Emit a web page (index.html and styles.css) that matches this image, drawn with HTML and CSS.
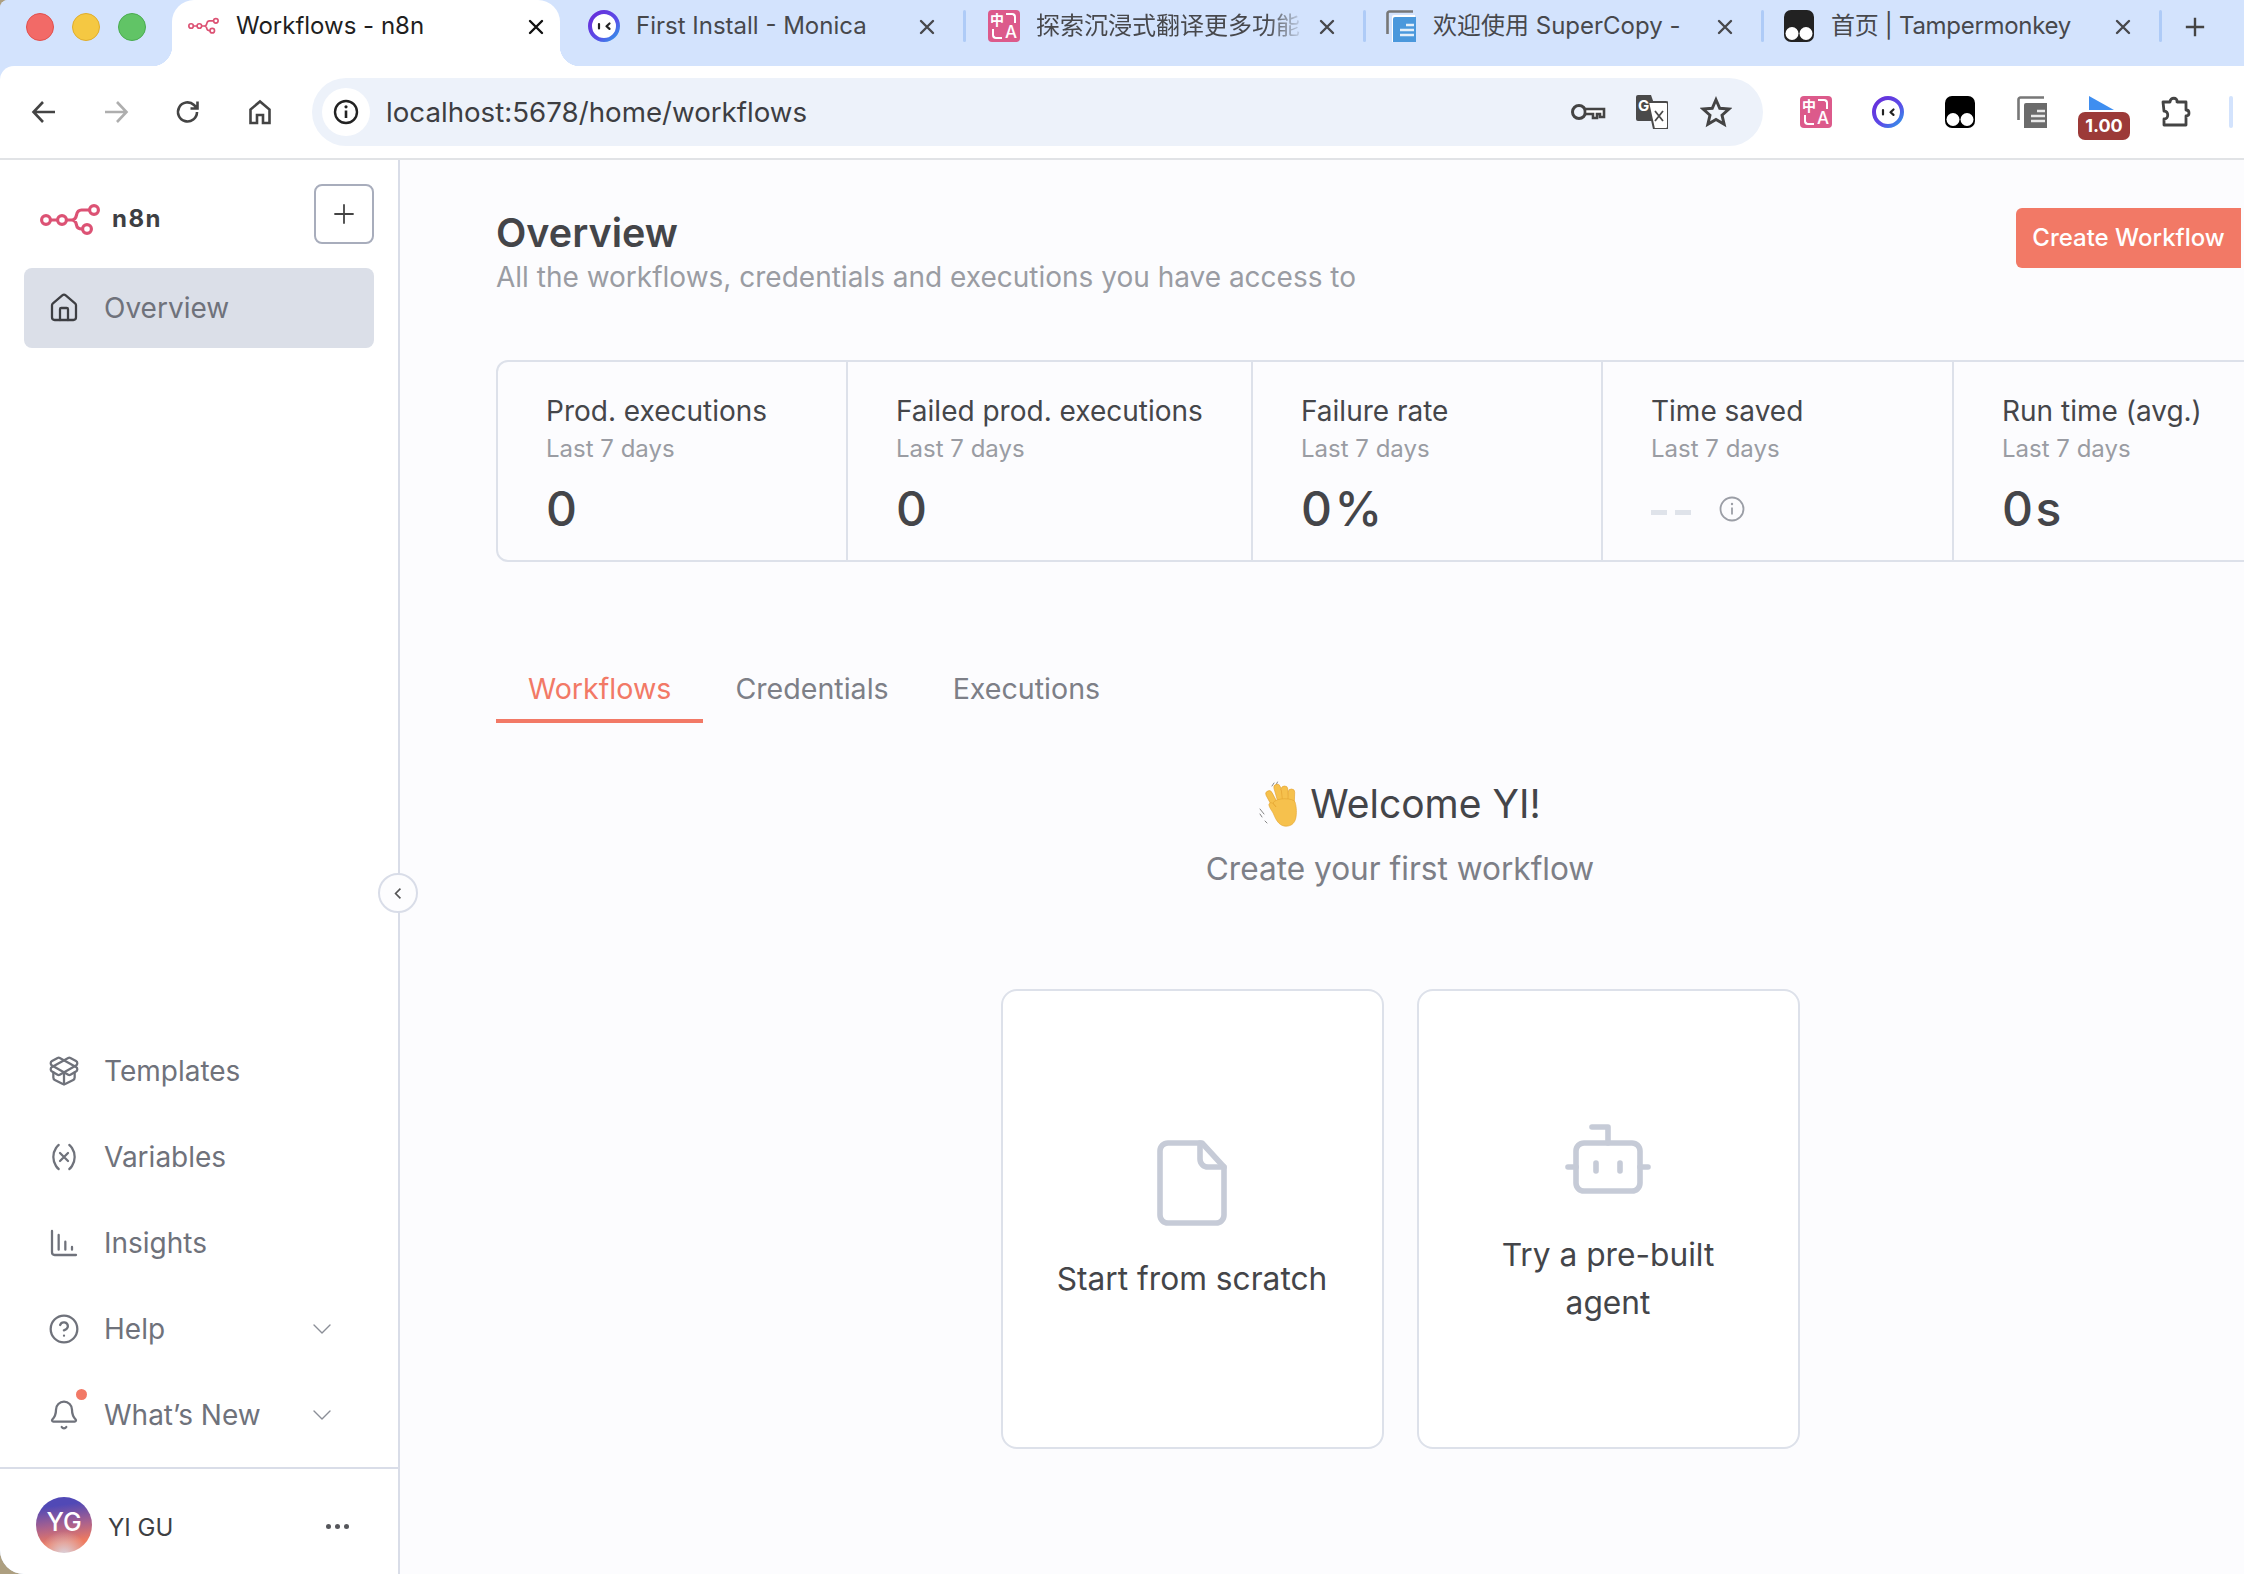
FILE: index.html
```html
<!DOCTYPE html>
<html lang="en">
<head>
    <meta charset="UTF-8">
    <meta name="viewport" content="width=device-width, initial-scale=1.0">
    <title>Workflows - n8n</title>
    <link rel="stylesheet" href="styles.css">
</head>
<body>
    <svg class="sprite" xmlns="http://www.w3.org/2000/svg">
        <defs>
            <linearGradient id="monicaRing" x1="0" y1="0" x2="1" y2="1">
                <stop offset="0" stop-color="#6a2bd9"/>
                <stop offset="0.6" stop-color="#5a4de8"/>
                <stop offset="1" stop-color="#2f9be8"/>
            </linearGradient>
        </defs>
        <symbol id="n8nLogo" viewBox="0 0 62 40">
            <g fill="none" stroke="#dc5274" stroke-width="3.2" stroke-linecap="round">
                <circle cx="6" cy="20" r="4.4"/>
                <circle cx="22" cy="20" r="4.4"/>
                <circle cx="54" cy="10" r="4.4"/>
                <circle cx="47" cy="29" r="4.4"/>
                <path d="M10.5 20h7M26.5 20h5c3 0 4.500-2 5-5 .6-3 2-5 5-5h7.500M31.500 20c3 0 4.500 2 5 5 .4 2.500 2 4 5.500 4"/>
            </g>
        </symbol>
        <symbol id="monica" viewBox="0 0 32 32">
            <circle cx="16" cy="16" r="14" fill="#fff" stroke="url(#monicaRing)" stroke-width="4"/>
            <path d="M11 14v4.500M21.500 13.500l-3 2.700 3 2.700" fill="none" stroke="#222" stroke-width="2.200" stroke-linecap="round" stroke-linejoin="round"/>
        </symbol>
        <symbol id="monkey" viewBox="0 0 30 32">
            <rect width="30" height="32" rx="7"/>
            <circle cx="8" cy="23.500" r="6.500" fill="#fff"/>
            <circle cx="22" cy="23.500" r="6.500" fill="#fff"/>
        </symbol>
        <symbol id="copyPages" viewBox="0 0 30 32">
            <path d="M27 1.500H3.500a2 2 0 0 0-2 2V24" fill="none" stroke="#777" stroke-width="2.600"/>
            <path d="M29 5H8a2 2 0 0 0-2 2v25h23z" fill="#fff"/>
            <path d="M30 7H9a2 2 0 0 0-2 2v23h23z" fill="currentColor"/>
            <path d="M20 15h8M14 20h14M14 25h14" stroke="#fff" stroke-width="2.400" opacity=".85"/>
        </symbol>
        <symbol id="chevronDown" viewBox="0 0 18 10">
            <path d="M1 1l8 8 8-8" fill="none" stroke="#8b8e97" stroke-width="1.400" stroke-linecap="round" stroke-linejoin="round"/>
        </symbol>
        <symbol id="closeX" viewBox="0 0 16 16">
            <path d="M2 2l12 12M14 2L2 14" fill="none" stroke="currentColor" stroke-width="2.400" stroke-linecap="round"/>
        </symbol>
    </svg>

    <div class="window">
        <div class="tabstrip">
            <div class="lights">
                <span class="light red"></span>
                <span class="light yellow"></span>
                <span class="light green"></span>
            </div>
            <div class="tab active">
                <svg class="fav"><use href="#n8nLogo"/></svg>
                <span class="tab-title">Workflows - n8n</span>
                <svg class="tab-close"><use href="#closeX"/></svg>
            </div>
            <div class="tab second">
                <svg class="fav"><use href="#monica"/></svg>
                <span class="tab-title">First Install - Monica</span>
                <svg class="tab-close"><use href="#closeX"/></svg>
            </div>
            <i class="tab-sep"></i>
            <div class="tab">
                <span class="fanyi fav"><b>中</b><b class="fanyi-a">A</b></span>
                <span class="tab-title faded">探索沉浸式翻译更多功能</span>
                <svg class="tab-close"><use href="#closeX"/></svg>
            </div>
            <i class="tab-sep"></i>
            <div class="tab narrow">
                <svg class="fav copy-blue"><use href="#copyPages"/></svg>
                <span class="tab-title">欢迎使用 SuperCopy -</span>
                <svg class="tab-close"><use href="#closeX"/></svg>
            </div>
            <i class="tab-sep"></i>
            <div class="tab narrow">
                <svg class="fav monkey-dark"><use href="#monkey"/></svg>
                <span class="tab-title tight">首页 | Tampermonkey</span>
                <svg class="tab-close"><use href="#closeX"/></svg>
            </div>
            <i class="tab-sep"></i>
            <svg class="new-tab" viewBox="0 0 24 24"><path d="M12 2v20M2 12h20" fill="none" stroke="#444" stroke-width="2.600"/></svg>
        </div>

        <div class="toolbar">
            <div class="nav-btn">
                <svg viewBox="0 0 26 26"><path d="M24 13H3M12 3L2.500 13l9.500 10" fill="none" stroke="#444" stroke-width="2.600"/></svg>
            </div>
            <div class="nav-btn">
                <svg viewBox="0 0 26 26"><path d="M2 13h21M14 3l9.500 10L14 23" fill="none" stroke="#aeaeae" stroke-width="2.600"/></svg>
            </div>
            <div class="nav-btn">
                <svg viewBox="0 0 26 26"><path d="M22 13a9.500 9.500 0 1 1-3-7l3 3M22.500 2.500V9.500h-7" fill="none" stroke="#444" stroke-width="2.600"/></svg>
            </div>
            <div class="nav-btn">
                <svg viewBox="0 0 26 26"><path d="M3.500 24V10.500L13 2.500l9.500 8V24h-6.500v-8h-6v8z" fill="none" stroke="#444" stroke-width="2.600"/></svg>
            </div>
            <div class="address">
                <span class="site-info">
                    <svg viewBox="0 0 26 26"><circle cx="13" cy="13" r="11" fill="none" stroke="#222" stroke-width="2.400"/><path d="M13 11.500V19" stroke="#222" stroke-width="2.600"/><circle cx="13" cy="7.800" r="1.600" fill="#222"/></svg>
                </span>
                <span class="url">localhost:5678/home/workflows</span>
                <span class="address-icons">
                    <svg class="key" viewBox="0 0 36 20"><circle cx="9" cy="10" r="6.500" fill="none" stroke="#444" stroke-width="3"/><path d="M15 7h19v8h-4v-3h-3v4h-4v-4h-8z" fill="#fff" stroke="#444" stroke-width="2.600"/></svg>
                    <svg class="gtrans" viewBox="0 0 32 34">
                        <path d="M2 0h13l9 26H2a2 2 0 0 1-2-2V2a2 2 0 0 1 2-2z" fill="#4a4a4a"/>
                        <path d="M12 7h18a2 2 0 0 1 2 2v23a2 2 0 0 1-2 2H18z" fill="#fff" stroke="#4a4a4a" stroke-width="2"/>
                        <text x="2" y="16" class="gtrans-g">G</text>
                        <path d="M19 16l8 10M27 16l-8 10" stroke="#4a4a4a" stroke-width="1.800"/>
                    </svg>
                    <svg class="star" viewBox="0 0 24 24"><path d="M12 2.800l2.800 6.400 6.900.6-5.200 4.600 1.600 6.800-6.100-3.600-6.100 3.600 1.600-6.800-5.200-4.600 6.900-.6z" fill="none" stroke="#444" stroke-width="2.200"/></svg>
                </span>
            </div>
            <div class="extensions">
                <span class="ext"><span class="fanyi"><b>中</b><b class="fanyi-a">A</b></span></span>
                <span class="ext"><svg class="ext-icon"><use href="#monica"/></svg></span>
                <span class="ext"><svg class="ext-icon monkey-black"><use href="#monkey"/></svg></span>
                <span class="ext"><svg class="ext-icon copy-grey"><use href="#copyPages"/></svg></span>
                <span class="ext">
                    <svg class="ext-icon" viewBox="0 0 32 32"><path d="M1 0l25 14H1z" fill="#3f8ef0"/></svg>
                    <span class="speed-badge">1.00</span>
                </span>
                <span class="ext">
                    <svg class="ext-icon" viewBox="0 0 32 32"><path d="M3 6h7c0-5 8-5 7 0h9v8c4 0 4 6 0 6v9H4v-6c5 0 5-8 0-8z" fill="none" stroke="#444" stroke-width="2.800" stroke-linejoin="round"/></svg>
                </span>
                <i class="toolbar-sep"></i>
            </div>
        </div>

        <div class="app">
            <aside class="sidebar">
                <div class="side-head">
                    <div class="brand">
                        <svg class="brand-logo"><use href="#n8nLogo"/></svg>
                        <span class="brand-name">n8n</span>
                    </div>
                    <button class="add-btn">
                        <svg viewBox="0 0 20 20"><path d="M10 1v18M1 10h18" fill="none" stroke="#444" stroke-width="1.800" stroke-linecap="round"/></svg>
                    </button>
                </div>
                <a class="overview-link">
                    <svg class="nav-icon dark" viewBox="0 0 24 24"><path d="M15 21v-8a1 1 0 0 0-1-1h-4a1 1 0 0 0-1 1v8"/><path d="M3 10a2 2 0 0 1 .709-1.528l7-5.999a2 2 0 0 1 2.582 0l7 5.999A2 2 0 0 1 21 10v9a2 2 0 0 1-2 2H5a2 2 0 0 1-2-2z"/></svg>
                    <span>Overview</span>
                </a>

                <nav class="side-bottom">
                    <a class="side-item">
                        <svg class="nav-icon" viewBox="0 0 24 24"><path d="M12 22v-9"/><path d="M15.170 2.210a1.670 1.670 0 0 1 1.630 0L21 4.570a1.930 1.930 0 0 1 0 3.360L8.820 14.790a1.655 1.655 0 0 1-1.640 0L3 12.430a1.930 1.930 0 0 1 0-3.360z"/><path d="M20 13v3.870a2.060 2.060 0 0 1-1.110 1.830l-6 3.080a1.930 1.930 0 0 1-1.780 0l-6-3.080A2.060 2.060 0 0 1 4 16.870V13"/><path d="M21 12.430a1.930 1.930 0 0 0 0-3.360L8.830 2.200a1.640 1.640 0 0 0-1.630 0L3 4.570a1.930 1.930 0 0 0 0 3.360l12.180 6.860a1.636 1.636 0 0 0 1.630 0z"/></svg>
                        <span>Templates</span>
                    </a>
                    <a class="side-item">
                        <svg class="nav-icon" viewBox="0 0 24 24"><path d="M8 21s-4-3-4-9 4-9 4-9"/><path d="M16 3s4 3 4 9-4 9-4 9"/><path d="M15 9l-6 6M9 9l6 6"/></svg>
                        <span>Variables</span>
                    </a>
                    <a class="side-item">
                        <svg class="nav-icon" viewBox="0 0 24 24"><path d="M3 3v16a2 2 0 0 0 2 2h16"/><path d="M8 6v11M13 11v6M18 15v2"/></svg>
                        <span>Insights</span>
                    </a>
                    <a class="side-item">
                        <svg class="nav-icon" viewBox="0 0 24 24"><circle cx="12" cy="12" r="10"/><path d="M9.090 9a3 3 0 0 1 5.830 1c0 2-3 3-3 3"/><path d="M12 17h.01"/></svg>
                        <span>Help</span>
                        <svg class="chev"><use href="#chevronDown"/></svg>
                    </a>
                    <a class="side-item">
                        <span class="bell">
                            <svg class="nav-icon" viewBox="0 0 24 24"><path d="M10.268 21a2 2 0 0 0 3.464 0"/><path d="M3.262 15.326A1 1 0 0 0 4 17h16a1 1 0 0 0 .74-1.673C19.410 13.956 18 12.499 18 8A6 6 0 0 0 6 8c0 4.499-1.411 5.956-2.738 7.326"/></svg>
                            <i class="bell-dot"></i>
                        </span>
                        <span>What’s New</span>
                        <svg class="chev"><use href="#chevronDown"/></svg>
                    </a>
                </nav>

                <div class="user-row">
                    <span class="avatar">YG</span>
                    <span class="user-name">YI GU</span>
                    <span class="dots"><i></i><i></i><i></i></span>
                </div>
            </aside>

            <span class="collapse-btn">
                <svg viewBox="0 0 12 16"><path d="M9 2L3 8l6 6" fill="none" stroke="#555" stroke-width="2"/></svg>
            </span>

            <main class="main">
                <div class="content">
                    <header class="page-head">
                        <div>
                            <h1>Overview</h1>
                            <p>All the workflows, credentials and executions you have access to</p>
                        </div>
                        <button class="create-btn">Create Workflow</button>
                    </header>

                    <section class="stats">
                        <div class="stat">
                            <div class="stat-label">Prod. executions</div>
                            <div class="stat-sub">Last 7 days</div>
                            <div class="stat-value">0</div>
                        </div>
                        <div class="stat">
                            <div class="stat-label">Failed prod. executions</div>
                            <div class="stat-sub">Last 7 days</div>
                            <div class="stat-value">0</div>
                        </div>
                        <div class="stat">
                            <div class="stat-label">Failure rate</div>
                            <div class="stat-sub">Last 7 days</div>
                            <div class="stat-value">0%</div>
                        </div>
                        <div class="stat">
                            <div class="stat-label">Time saved</div>
                            <div class="stat-sub">Last 7 days</div>
                            <div class="stat-value empty">
                                <span class="dashes"><i></i><i></i></span>
                                <svg class="info" viewBox="0 0 26 26"><circle cx="13" cy="13" r="11.500" fill="none" stroke="#9b9ea6" stroke-width="1.800"/><path d="M13 11.500v7" stroke="#9b9ea6" stroke-width="1.800"/><circle cx="13" cy="8" r="1.200" fill="#9b9ea6"/></svg>
                            </div>
                        </div>
                        <div class="stat">
                            <div class="stat-label">Run time (avg.)</div>
                            <div class="stat-sub">Last 7 days</div>
                            <div class="stat-value">0s</div>
                        </div>
                    </section>

                    <div class="tabs">
                        <a class="page-tab selected">Workflows</a>
                        <a class="page-tab">Credentials</a>
                        <a class="page-tab">Executions</a>
                    </div>

                    <section class="welcome">
                        <h2>
                            <svg class="wave" viewBox="0 0 40 46">
                                <g fill="none" stroke="#777" stroke-width=".9" stroke-linecap="round">
                                    <path d="M13 5l2-3M17 4l1.500-3M1 33l2 3M1 28l4 5M6 40l2 2"/>
                                </g>
                                <g fill="#f6c14d" stroke="#e3a22f" stroke-width=".6">
                                    <rect x="17" y="3" width="6.500" height="22" rx="3.200" transform="rotate(-16 20 14)"/>
                                    <rect x="23" y="5" width="6.500" height="20" rx="3.200" transform="rotate(-6 26 15)"/>
                                    <rect x="29" y="8" width="6.500" height="18" rx="3.200" transform="rotate(2 32 17)"/>
                                    <rect x="10" y="9" width="6.500" height="20" rx="3.200" transform="rotate(-28 13 19)"/>
                                    <path d="M14 22c3-6 21-5 22-1 1 3 2 9 1 15-1 7-6 10-12 9-5-1-8-6-10-11-1-3-6-9-5-11 2-3 5 0 7 3z"/>
                                </g>
                            </svg>
                            <span>Welcome YI!</span>
                        </h2>
                        <p>Create your first workflow</p>
                        <div class="start-cards">
                            <div class="start-card">
                                <svg class="start-icon" viewBox="0 0 24 24"><path d="M14.500 2H6a2 2 0 0 0-2 2v16a2 2 0 0 0 2 2h12a2 2 0 0 0 2-2V8z"/><path d="M14 2v4a2 2 0 0 0 2 2h4"/></svg>
                                <span>Start from scratch</span>
                            </div>
                            <div class="start-card">
                                <svg class="start-icon" viewBox="0 0 24 24"><path d="M12 8V4H8"/><rect x="4" y="8" width="16" height="12" rx="2"/><path d="M2 14h2M20 14h2M15 13v2M9 13v2"/></svg>
                                <span>Try a pre-built<br>agent</span>
                            </div>
                        </div>
                    </section>
                </div>
            </main>
        </div>
    </div>
</body>
</html>
```

FILE: styles.css
```css
* { box-sizing: border-box; }
body {
    margin: 0;
    height: 100vh;
    overflow: hidden;
    background-color: #ad9f80;
    font-family: Inter, "Noto Sans CJK SC", sans-serif;
    color: #444549;
}
.sprite { position: absolute; width: 0; height: 0; }

.window {
    height: 100vh;
    display: flex;
    flex-direction: column;
    overflow: hidden;
    border-radius: 8px 0 0 24px;
    background-color: #d3e3fd;
}

/* browser tab strip */
.tabstrip {
    height: 66px;
    flex-shrink: 0;
    display: flex;
    background-color: #d3e3fd;
}
.lights { width: 172px; flex-shrink: 0; display: flex; gap: 18px; padding: 13px 0 0 26px; }
.light { width: 28px; height: 28px; border-radius: 50%; }
.red { background-color: #f26a67; border: 1px solid #e2504d; }
.yellow { background-color: #f5c842; border: 1px solid #e0ad2b; }
.green { background-color: #61c466; border: 1px solid #4aac50; }
.tab {
    width: 397px;
    height: 66px;
    flex-shrink: 0;
    display: flex;
    align-items: flex-start;
    padding: 10px 20px 0 22px;
    font-size: 24px;
    color: #47484c;
    position: relative;
}
.tab.second { margin-left: 6px; }
.tab.narrow { width: 395px; padding-left: 19px; }
.tab.active {
    width: 388px;
    padding-left: 16px;
    background-color: #fff;
    color: #1f1f1f;
    border-radius: 22px 22px 0 0;
}
.tab.active .tab-close { color: #111; margin-right: -4px; }
.tab.active::before,
.tab.active::after {
    content: "";
    position: absolute;
    bottom: 0;
    width: 20px;
    height: 20px;
}
.tab.active::before { left: -20px; background: radial-gradient(circle at 0 0, #d3e3fd 20px, #fff 20.500px); }
.tab.active::after { right: -20px; background: radial-gradient(circle at 100% 0, #d3e3fd 20px, #fff 20.500px); }
.fav { width: 32px; height: 32px; flex-shrink: 0; }
.tab-title {
    flex: 1;
    min-width: 0;
    margin: 0 14px 0 16px;
    line-height: 32px;
    white-space: nowrap;
    overflow: hidden;
}
.tab-title.tight { letter-spacing: -0.3px; }
.tab-title.faded { -webkit-mask-image: linear-gradient(to right, #000 86%, transparent 100%); mask-image: linear-gradient(to right, #000 86%, transparent 100%); }
.tab-close { width: 16px; height: 16px; flex-shrink: 0; margin: 9px 8px 0 0; color: #47484c; }
.tab-sep { width: 3px; height: 32px; margin-top: 10px; flex-shrink: 0; border-radius: 2px; background-color: #aecbf7; }
.new-tab { width: 22px; height: 22px; margin: 16px 0 0 22px; }
.fanyi {
    width: 32px;
    height: 32px;
    flex-shrink: 0;
    display: block;
    position: relative;
    border-radius: 4px;
    background-color: #dc5a8b;
    color: #fff;
    font-size: 14px;
    line-height: 15px;
    overflow: hidden;
}
.fanyi b { font-weight: 700; position: absolute; left: 2px; top: 2px; }
.fanyi .fanyi-a { left: auto; right: 3px; top: 14px; font-size: 17px; font-weight: 500; line-height: 17px; }
.fanyi::before,
.fanyi::after { content: ""; position: absolute; width: 8px; height: 8px; border: 0 solid #fff; }
.fanyi::before { right: 4px; top: 3px; border-width: 2px 2px 0 0; border-top-right-radius: 4px; }
.fanyi::after { left: 4px; bottom: 3px; border-width: 0 0 2px 2px; border-bottom-left-radius: 4px; }
.copy-blue { color: #4a98dc; }
.copy-grey { color: #6b6b6b; }
.monkey-dark { color: #222; fill: #222; }
.monkey-black { fill: #000; }

/* toolbar */
.toolbar {
    height: 94px;
    flex-shrink: 0;
    display: flex;
    align-items: center;
    padding: 0 0 0 20px;
    background-color: #fff;
    border-bottom: 2px solid #e1e3e6;
    border-top-left-radius: 14px;
}
.nav-btn { width: 48px; height: 48px; margin-right: 24px; display: flex; align-items: center; justify-content: center; }
.nav-btn svg { width: 26px; height: 26px; }
.address {
    width: 1451px;
    height: 68px;
    margin-left: 4px;
    flex-shrink: 0;
    display: flex;
    align-items: center;
    padding: 0 31px 0 10px;
    border-radius: 34px;
    background-color: #edf2fa;
}
.site-info { width: 48px; height: 48px; border-radius: 50%; background-color: #fff; display: flex; align-items: center; justify-content: center; }
.site-info svg { width: 26px; height: 26px; }
.url { margin-left: 16px; font-size: 27.700px; color: #3d3e42; }
.address-icons { margin-left: auto; display: flex; align-items: center; gap: 30px; }
.key { width: 36px; height: 20px; }
.gtrans { width: 32px; height: 34px; }
.gtrans-g { font-size: 15px; font-weight: 700; fill: #fff; }
.star { width: 32px; height: 32px; margin-left: 2px; }
.extensions { display: flex; align-items: center; margin-left: 17px; }
.ext { width: 72px; height: 32px; position: relative; display: flex; justify-content: center; }
.ext-icon { width: 32px; height: 32px; }
.speed-badge {
    position: absolute;
    left: 10px;
    top: 16px;
    width: 52px;
    height: 28px;
    border-radius: 7px;
    background-color: #9c3a38;
    color: #fff;
    font-size: 18px;
    font-weight: 700;
    line-height: 28px;
    text-align: center;
}
.toolbar-sep { width: 4px; height: 32px; margin-left: 17px; border-radius: 2px; background-color: #d3e3fd; flex-shrink: 0; }

/* n8n app */
.app { flex: 1; min-height: 0; display: flex; position: relative; }
.sidebar {
    width: 400px;
    flex-shrink: 0;
    display: flex;
    flex-direction: column;
    background-color: #fff;
    border-right: 2px solid #d9dde8;
}
.side-head { height: 84px; margin-top: 24px; padding-left: 40px; padding-right: 24px; display: flex; justify-content: space-between; }
.brand { display: flex; align-items: flex-start; gap: 10px; margin-top: 16px; }
.brand-logo { width: 62px; height: 40px; }
.brand-name { font-size: 24px; font-weight: 700; letter-spacing: 1.500px; line-height: 38px; color: #3e3f43; }
.add-btn {
    width: 60px;
    height: 60px;
    padding: 0;
    display: flex;
    align-items: center;
    justify-content: center;
    background-color: #fff;
    border: 2px solid #a8adbc;
    border-radius: 8px;
}
.add-btn svg { width: 20px; height: 20px; }
.overview-link {
    height: 80px;
    margin-left: 24px;
    width: 350px;
    display: flex;
    align-items: center;
    gap: 24px;
    padding-left: 24px;
    border-radius: 8px;
    background-color: #dbdfe8;
    font-size: 28px;
    color: #6f727b;
}
.nav-icon { width: 32px; height: 32px; flex-shrink: 0; fill: none; stroke: #6f727b; stroke-width: 1.700; stroke-linecap: round; stroke-linejoin: round; }
.nav-icon.dark { stroke: #3e3f43; }
.side-bottom { margin-top: auto; padding-bottom: 9px; }
.side-item {
    height: 86px;
    display: flex;
    align-items: center;
    gap: 24px;
    padding-left: 48px;
    font-size: 28px;
    color: #6f727b;
}
.chev { width: 18px; height: 10px; margin-left: auto; margin-right: 67px; }
.bell { position: relative; display: flex; }
.bell-dot { position: absolute; left: 28px; top: -10px; width: 11px; height: 11px; border-radius: 50%; background-color: #f27966; }
.user-row {
    height: 107px;
    flex-shrink: 0;
    display: flex;
    align-items: flex-start;
    padding: 28px 49px 0 36px;
    border-top: 2px solid #d9dde8;
}
.avatar {
    width: 56px;
    height: 56px;
    flex-shrink: 0;
    border-radius: 50%;
    background: radial-gradient(circle at 50% 105%, #d9d9e6 0, rgba(217,217,230,0) 38%), linear-gradient(172deg, #5149b6 18%, #a9618e 50%, #ee7b60 78%);
    color: #fff;
    font-size: 25px;
    font-weight: 500;
    line-height: 50px;
    text-align: center;
}
.user-name { margin-left: 16px; font-size: 24px; line-height: 61px; color: #3e3f43; }
.dots { margin-left: auto; display: flex; gap: 4px; padding-top: 27px; }
.dots i { width: 5px; height: 5px; border-radius: 50%; background-color: #55565b; }
.collapse-btn {
    position: absolute;
    left: 378px;
    top: 713px;
    width: 40px;
    height: 40px;
    display: flex;
    align-items: center;
    justify-content: center;
    border-radius: 50%;
    background-color: #fdfdfe;
    border: 2px solid #d9dde8;
}
.collapse-btn svg { width: 10px; height: 13px; }

/* main page */
.main { flex: 1; min-width: 0; overflow: hidden; padding-left: 96px; background-color: #fcfcfe; }
.content { width: 1808px; }
.page-head { display: flex; justify-content: space-between; align-items: flex-start; padding-top: 48px; padding-right: 63px; }
h1 { margin: 1px 0 2px; font-size: 39.500px; font-weight: 600; line-height: 48px; color: #444549; }
.page-head p { margin: 0; font-size: 28px; line-height: 36px; color: #9a9ca3; }
.create-btn {
    width: 225px;
    height: 60px;
    padding: 0 0 2px;
    border: none;
    border-radius: 6px 0 0 6px;
    background-color: #f27966;
    color: #fff;
    font-family: inherit;
    font-size: 24px;
    font-weight: 500;
}
.stats {
    margin-top: 65px;
    height: 202px;
    display: grid;
    grid-template-columns: 348px 405px 350px 351px 1fr;
    border: 2px solid #dde1ea;
    border-radius: 12px 0 0 12px;
}
.stat { padding: 31px 0 0 48px; border-left: 2px solid #dde1ea; }
.stat:first-child { padding-left: 48px; border-left: none; }
.stat-label { font-size: 28px; line-height: 36px; color: #45464a; }
.stat-sub { margin-top: 4px; font-size: 24px; line-height: 32px; color: #9a9ca3; }
.stat-value { margin-top: 16px; font-size: 48px; font-weight: 500; line-height: 56px; letter-spacing: 2.500px; color: #444549; }
.stat-value.empty { display: flex; align-items: center; gap: 28px; min-height: 56px; }
.dashes { display: flex; gap: 8px; margin-top: 6px; }
.dashes i { width: 16px; height: 5px; background-color: #dfe3ea; }
.info { width: 26px; height: 26px; }
.tabs { margin: 109px 0 0; display: flex; }
.page-tab { padding: 0 32px 12px; height: 52px; font-size: 28.600px; line-height: 36px; color: #7d7f87; }
.page-tab.selected { color: #f27966; border-bottom: 4px solid #f27966; }
.welcome { display: flex; flex-direction: column; align-items: center; }
h2 { margin: 53px 0 0; display: flex; align-items: center; gap: 11px; font-size: 39px; font-weight: 400; line-height: 56px; color: #444549; }
.wave { width: 40px; height: 46px; }
.welcome > p { margin: 17px 0 0; font-size: 31.600px; line-height: 40px; color: #7d7f87; }
.start-cards { margin-top: 100px; display: flex; gap: 33px; }
.start-card {
    width: 383px;
    height: 460px;
    display: flex;
    flex-direction: column;
    align-items: center;
    justify-content: center;
    gap: 24px;
    background-color: #fff;
    border: 2px solid #dde1ea;
    border-radius: 16px;
    font-size: 31.700px;
    line-height: 48px;
    text-align: center;
    color: #444549;
}
.start-icon { width: 96px; height: 96px; fill: none; stroke: #c6cbd7; stroke-width: 1.400; stroke-linecap: round; stroke-linejoin: round; }
```
